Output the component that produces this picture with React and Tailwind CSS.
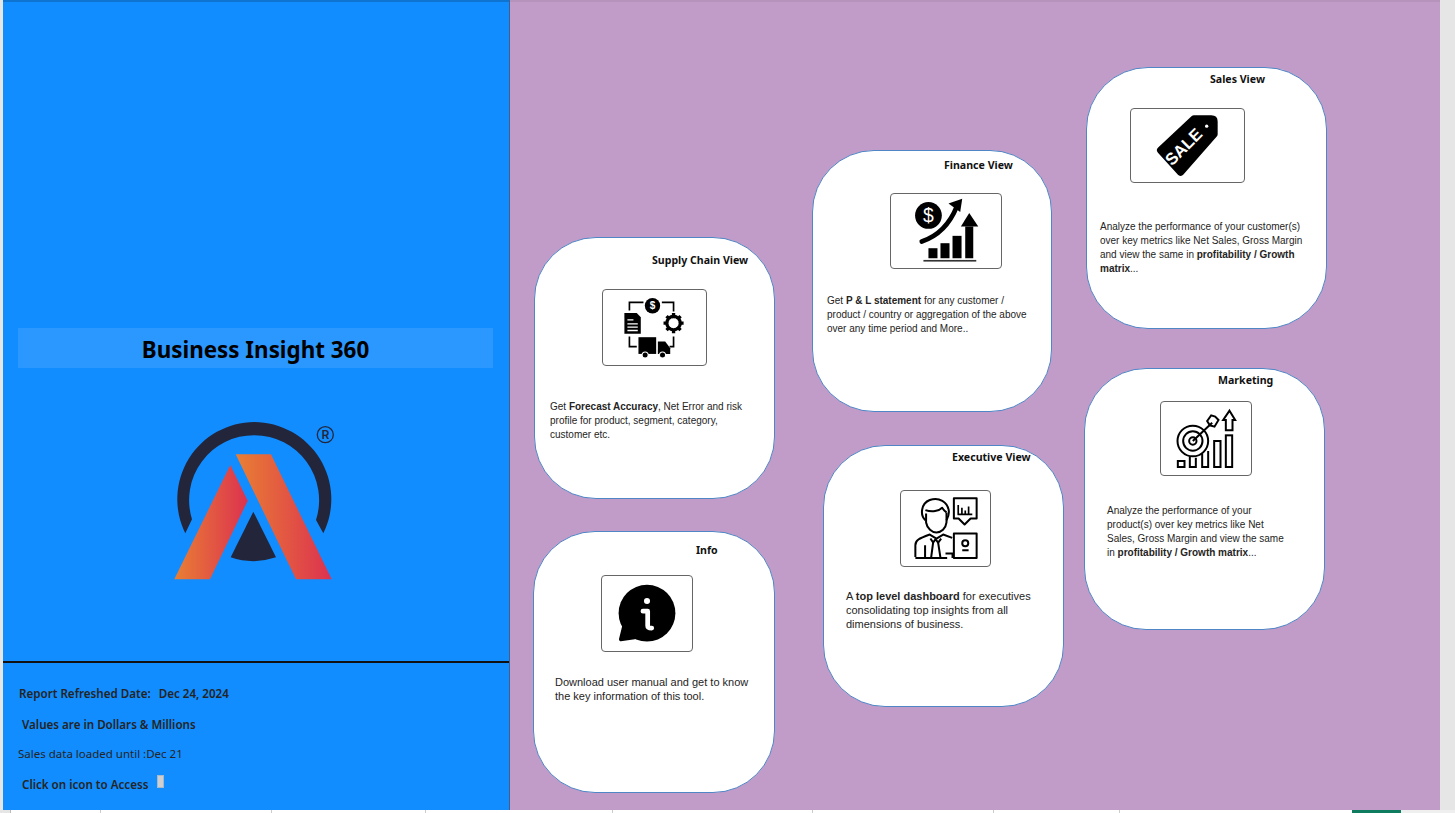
const ui = { fontFamily: '"Noto Sans", sans-serif' };

function Logo() {
  return (
    <svg viewBox="170 415 170 170" className="w-[170px] h-[170px]">
      <defs>
        <linearGradient id="legLeft" x1="0" y1="0" x2="1" y2="0">
          <stop offset="0" stopColor="#e97f34" />
          <stop offset="1" stopColor="#dc324f" />
        </linearGradient>
      </defs>
      <path d="M185.3 533.3 A77 77 0 1 1 323.3 533.3 L316 520 A65 65 0 1 0 192 519.3 Z" fill="#23263a" />
      <path d="M174.3 579.3 L230.3 465 L247.7 500.7 L210 579.3 Z" fill="url(#legLeft)" />
      <path d="M235.7 454.3 H271 L331.7 579.3 H296 Z" fill="url(#legLeft)" />
      <path d="M253.3 511.7 L276 557.3 Q253 565 230.7 557.3 Z" fill="#23263a" />
      <circle cx="325.3" cy="434.7" r="8" fill="none" stroke="#23263a" strokeWidth="1.3" />
      <text x="325.3" y="439.2" textAnchor="middle" fontSize="12" fontWeight="600" fill="#23263a" fontFamily="Inter, sans-serif">R</text>
    </svg>
  );
}

function SupplyIcon() {
  return (
    <svg viewBox="39 31 308 224" className="w-full h-full">
      <g fill="none" stroke="#000" strokeWidth="5">
        <path d="M118 92 V68 H160" />
        <path d="M215 68 H250 V95" />
        <path d="M118 170 V200 H140" />
        <path d="M250 170 V200 H238" />
      </g>
      <circle cx="187" cy="78" r="23" fill="#000" />
      <text x="187" y="89" textAnchor="middle" fontSize="30" fontWeight="700" fill="#fff" fontFamily="Liberation Sans, sans-serif">$</text>
      <path d="M103 100 H140 L152 112 V162 H103 Z" fill="#000" />
      <path d="M112 120 H130 M112 132 H143 M112 142 H143 M112 152 H143" stroke="#fff" strokeWidth="4" />
      <circle cx="250" cy="130" r="20" fill="none" stroke="#000" strokeWidth="10" />
      <g stroke="#000" strokeWidth="10">
        <path d="M250 100 V160 M220 130 H280 M229 109 L271 151 M271 109 L229 151" />
      </g>
      <circle cx="250" cy="130" r="15" fill="#fff" />
      <rect x="145" y="172" width="53" height="50" fill="#000" />
      <path d="M203 185 H225 L240 205 V222 H203 Z" fill="#000" />
      <circle cx="165" cy="225" r="9" fill="#000" stroke="#fff" strokeWidth="3" />
      <circle cx="217" cy="225" r="9" fill="#000" stroke="#fff" strokeWidth="3" />
    </svg>
  );
}

function FinanceIcon() {
  return (
    <svg viewBox="33 28 329 221" className="w-full h-full">
      <circle cx="145" cy="92" r="40" fill="#000" />
      <text x="145" y="113" textAnchor="middle" fontSize="58" fill="#fff" fontFamily="Liberation Sans, sans-serif">$</text>
      <path d="M125 170 C170 155 208 120 230 65" fill="none" stroke="#000" strokeWidth="14" strokeLinecap="round" />
      <path d="M246 42 L205 56 L240 82 Z" fill="#000" />
      <rect x="255" y="125" width="24" height="95" fill="#000" />
      <path d="M267 85 L294 125 H242 Z" fill="#000" />
      <rect x="145" y="190" width="27" height="30" fill="#000" />
      <rect x="181" y="175" width="27" height="45" fill="#000" />
      <rect x="217" y="153" width="27" height="67" fill="#000" />
      <rect x="130" y="225" width="158" height="5" fill="#333" />
    </svg>
  );
}

function SaleIcon() {
  return (
    <svg viewBox="33 28 339 216" className="w-full h-full">
      <path d="M122 150 L222 56 H274 Q282 56 282 64 V102 L182 216 Z" fill="#000" stroke="#000" strokeWidth="22" strokeLinejoin="round" />
      <circle cx="260" cy="78" r="5" fill="#fff" />
      <text x="0" y="0" transform="translate(203 152) rotate(-45)" textAnchor="middle" fontSize="50" fontWeight="700" fill="#fff" fontFamily="Liberation Sans, sans-serif">SALE</text>
    </svg>
  );
}

function MarketingIcon() {
  return (
    <svg viewBox="33 18 267 219" className="w-full h-full">
      <g fill="none" stroke="#000" strokeWidth="6">
        <circle cx="127" cy="135" r="46" />
        <circle cx="127" cy="135" r="29" />
        <circle cx="127" cy="135" r="11" />
        <path d="M127 135 L185 80" />
        <path d="M170 75 L182 58 L194 62 L204 72 L192 92 L178 88 Z" strokeWidth="6" />
        <rect x="82" y="195" width="20" height="18" />
        <path d="M118 182 V213 H136 V185" />
        <path d="M155 172 V213 H173 V165" />
        <rect x="191" y="135" width="19" height="78" />
        <rect x="226" y="118" width="19" height="95" />
        <path d="M237 44 L254 72 H246 V103 H226 V72 H218 Z" />
      </g>
    </svg>
  );
}

function ExecutiveIcon() {
  return (
    <svg viewBox="33 18 264 224" className="w-full h-full">
      <g fill="none" stroke="#000" strokeWidth="6" strokeLinejoin="round">
        <path d="M105 105 C88 90 92 55 118 45 C145 35 172 50 175 78 C176 90 172 98 168 105" />
        <path d="M105 75 C125 82 145 78 155 68 C160 76 165 80 168 82" />
        <path d="M107 85 V112 C110 130 125 142 138 142 C152 142 166 130 168 112 V82" />
        <path d="M75 215 V180 C75 165 85 160 118 148 L138 160 L158 148 L185 158" />
        <path d="M120 160 L128 172 L135 162 L143 172 L152 160" />
        <path d="M128 172 L122 218 M143 172 L150 218 M104 180 V218" />
        <path d="M75 218 H170" />
        <path d="M165 205 H186 V218" />
        <path d="M190 40 H258 V100 H240 L222 118 L204 100 H190 Z" />
        <path d="M203 60 V88 H245 M214 68 V86 M224 76 V86 M234 64 V86" strokeWidth="5" />
        <rect x="190" y="145" width="68" height="73" />
        <circle cx="224" cy="174" r="9" />
        <path d="M215 195 H234" />
      </g>
    </svg>
  );
}

function InfoIcon() {
  return (
    <svg viewBox="39 18 266 222" className="w-full h-full">
      <circle cx="172" cy="128" r="84" fill="#000" />
      <path d="M104 165 L94 206 L135 200 Z" fill="#000" stroke="#000" strokeWidth="10" strokeLinejoin="round" />
      <circle cx="172" cy="92" r="9" fill="#fff" />
      <path d="M160 122 H174 V165 Q174 172 186 172" fill="none" stroke="#fff" strokeWidth="14" strokeLinecap="round" strokeLinejoin="round" />
    </svg>
  );
}

function Card({ title, titleClass, iconClass, descClass, icon, children, className }) {
  return (
    <div className={`w-[241px] h-[262px] bg-white border border-[#4f86c6] rounded-[62px] ${className}`}>
      <p className={`text-[10.6px] leading-4 font-bold text-[#111] whitespace-nowrap ${titleClass}`} style={ui}>
        {title}
      </p>
      <div className={`bg-white border border-[#666] rounded-[4px] ${iconClass}`}>{icon}</div>
      <div className={`leading-[14px] text-[#252423] whitespace-nowrap font-['Liberation_Sans',sans-serif] ${descClass}`}>
        {children}
      </div>
    </div>
  );
}

export default function App() {
  return (
    <div className="w-[1455px] h-[813px] overflow-hidden flex flex-col bg-[#e6e6e6]">
      <div className="flex h-[810px] pl-[3px] pr-[15px]">
        <div className="w-[507px] shrink-0 bg-[#118dff] border-t-2 border-t-[#0f74d0] border-r border-r-[#3f5f8f] flex flex-col" style={ui}>
          <div className="mt-[326px] ml-[15px] mr-[16px] h-[40px] bg-[#2b98ff] flex items-center justify-center">
            <h1 className="text-[22.4px] font-bold text-black leading-none pt-[4px]">Business Insight 360</h1>
          </div>
          <div className="flex justify-start ml-[167px] mt-[47px] h-[170px]">
            <Logo />
          </div>
          <div className="mt-[76px] border-t-2 border-t-[#111] flex-1 text-[11.6px] text-[#252423]">
            <p className="mt-[23px] ml-[16px] font-semibold leading-4">
              Report Refreshed Date:<span className="ml-[8px]">Dec 24, 2024</span>
            </p>
            <p className="mt-[15px] ml-[19px] font-semibold leading-4">Values are in Dollars &amp; Millions</p>
            <p className="mt-[13px] ml-[15px] text-[11.5px] leading-4">Sales data loaded until :Dec 21</p>
            <div className="mt-[15px] ml-[19px] flex items-start">
              <p className="font-semibold leading-4">Click on icon to Access</p>
              <span className="ml-[9px] -mt-[2px] w-[7px] h-[13px] bg-[#cfcfcf] border border-[#a8b8cc]"></span>
            </div>
          </div>
        </div>

        <div className="flex-1 bg-[#c19cc8] border-t-2 border-t-[#b593bb] flex items-start">
          <div className="ml-[23px] mt-[235px] w-[242px] flex flex-col">
            <Card
              className="ml-[1px]"
              title="Supply Chain View"
              titleClass="pl-[117px] pt-[14px]"
              iconClass="w-[105px] h-[77px] ml-[67px] mt-[21px]"
              descClass="text-[10px] ml-[15px] mt-[34px]"
              icon={<SupplyIcon />}
            >
              Get <b>Forecast Accuracy</b>, Net Error and risk
              <br />
              profile for product, segment, category,
              <br />
              customer etc.
            </Card>
            <Card
              className="mt-[32px] !w-[242px]"
              title="Info"
              titleClass="pl-[162px] pt-[10px]"
              iconClass="w-[92px] h-[77px] ml-[67px] mt-[17px]"
              descClass="text-[11px] ml-[21px] mt-[23px]"
              icon={<InfoIcon />}
            >
              Download user manual and get to know
              <br />
              the key information of this tool.
            </Card>
          </div>

          <div className="ml-[37px] mt-[148px] w-[252px] flex flex-col">
            <Card
              title="Finance View"
              titleClass="pl-[131px] pt-[6px]"
              iconClass="w-[112px] h-[76px] ml-[77px] mt-[20px]"
              descClass="text-[10px] ml-[14px] mt-[25px]"
              icon={<FinanceIcon />}
              className="!w-[240px]"
            >
              Get <b>P &amp; L statement</b> for any customer /
              <br />
              product / country or aggregation of the above
              <br />
              over any time period and More..
            </Card>
            <Card
              className="mt-[33px] ml-[11px]"
              title="Executive View"
              titleClass="pl-[128px] pt-[3px]"
              iconClass="w-[91px] h-[77px] ml-[76px] mt-[25px]"
              descClass="text-[11px] ml-[22px] mt-[22px]"
              icon={<ExecutiveIcon />}
            >
              A <b>top level dashboard</b> for executives
              <br />
              consolidating top insights from all
              <br />
              dimensions of business.
            </Card>
          </div>

          <div className="ml-[20px] mt-[65px] w-[243px] flex flex-col">
            <Card
              className="ml-[2px]"
              title="Sales View"
              titleClass="pl-[123px] pt-[3px]"
              iconClass="w-[115px] h-[75px] ml-[43px] mt-[21px]"
              descClass="text-[10px] ml-[13px] mt-[37px]"
              icon={<SaleIcon />}
            >
              Analyze the performance of your customer(s)
              <br />
              over key metrics like Net Sales, Gross Margin
              <br />
              and view the same in <b>profitability / Growth</b>
              <br />
              <b>matrix</b>...
            </Card>
            <Card
              className="mt-[39px]"
              title="Marketing"
              titleClass="pl-[133px] pt-[3px]"
              iconClass="w-[92px] h-[75px] ml-[75px] mt-[13px]"
              descClass="text-[10px] ml-[22px] mt-[28px]"
              icon={<MarketingIcon />}
            >
              Analyze the performance of your
              <br />
              product(s) over key metrics like Net
              <br />
              Sales, Gross Margin and view the same
              <br />
              in <b>profitability / Growth matrix</b>...
            </Card>
          </div>
        </div>
      </div>

      <div className="flex h-[3px] bg-white">
        <div className="w-[11px] bg-[#e6e6e6] border-r border-r-[#bbb]"></div>
        <div className="w-[90px] border-r border-r-[#ccc]"></div>
        <div className="w-[171px] border-r border-r-[#ccc]"></div>
        <div className="w-[154px] border-r border-r-[#ccc]"></div>
        <div className="w-[187px] border-r border-r-[#ccc]"></div>
        <div className="w-[200px] border-r border-r-[#ccc]"></div>
        <div className="w-[181px] border-r border-r-[#ccc]"></div>
        <div className="w-[126px] border-r border-r-[#ccc]"></div>
        <div className="w-[232px]"></div>
        <div className="w-[49px] bg-[#107c5f]"></div>
        <div className="flex-1 bg-[#efefef]"></div>
      </div>
    </div>
  );
}
